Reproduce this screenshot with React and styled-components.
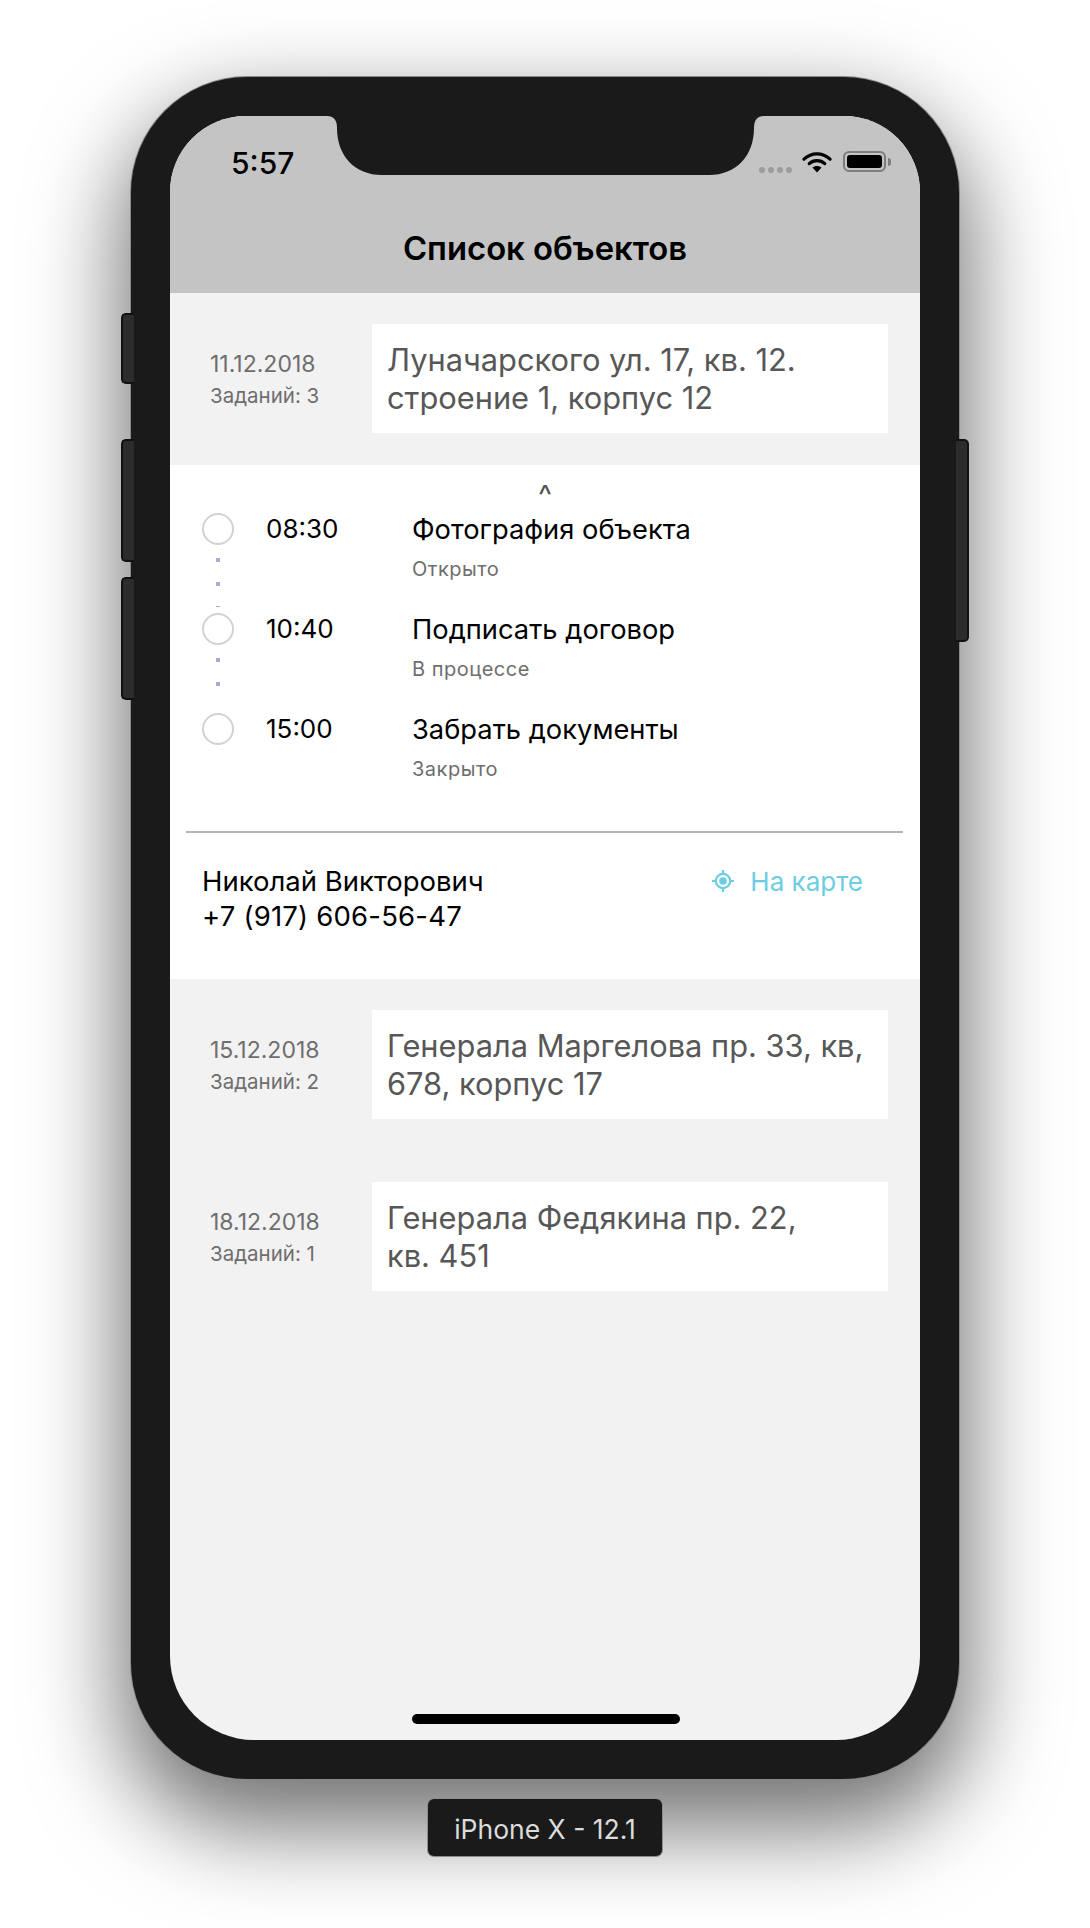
import styled, { createGlobalStyle } from "styled-components";

const objects = [
    { date: "15.12.2018", tasks: "Заданий: 2", address: ["Генерала Маргелова пр. 33, кв,", "678, корпус 17"] },
    { date: "18.12.2018", tasks: "Заданий: 1", address: ["Генерала Федякина пр. 22,", "кв. 451"] },
];

const tasks = [
    { time: "08:30", title: "Фотография объекта", status: "Открыто", line: 62 },
    { time: "10:40", title: "Подписать договор", status: "В процессе", line: 50 },
    { time: "15:00", title: "Забрать документы", status: "Закрыто", line: 0 },
];

const ObjectRow = ({ date, count, address }) => (
    <Row>
        <DateCol>
            <DateText>{date}</DateText>
            <Count>{count}</Count>
        </DateCol>
        <Address>
            {address.map((line) => (
                <div key={line}>{line}</div>
            ))}
        </Address>
    </Row>
);

const App = () => {
    return (
        <Page>
            <GlobalStyle />
            <Device>
                <SideButton $top={236} $height={71} />
                <SideButton $top={362} $height={123} />
                <SideButton $top={500} $height={123} />
                <PowerButton />
                <Screen>
                    <Notch viewBox="0 0 437 60">
                        <path d="M0 0Q10 0 10 12C10 40 28 59 55 59H382C409 59 427 40 427 12Q427 0 437 0Z" fill="#1a1a1a" />
                    </Notch>
                    <Header>
                        <StatusBar>
                            <Clock>5:57</Clock>
                            <StatusIcons>
                                <Signal>
                                    <i /><i /><i /><i />
                                </Signal>
                                <svg width="30" height="22" viewBox="0 0 30 22">
                                    <path d="M2 8.2C9.5 1 20.5 1 28 8.2" fill="none" stroke="#000" strokeWidth="3.2" strokeLinecap="round" />
                                    <path d="M7.2 12.6C11.5 8.6 18.5 8.6 22.8 12.6" fill="none" stroke="#000" strokeWidth="3.2" strokeLinecap="round" />
                                    <path d="M10.4 16.6C13 14.4 17 14.4 19.6 16.6L15 21.6Z" fill="#000" />
                                </svg>
                                <Battery>
                                    <BatteryFill />
                                </Battery>
                                <BatteryNub />
                            </StatusIcons>
                        </StatusBar>
                        <Title>Список объектов</Title>
                    </Header>
                    <Content>
                        <ObjectRow
                            date="11.12.2018"
                            count="Заданий: 3"
                            address={["Луначарского ул. 17, кв. 12.", "строение 1, корпус 12"]}
                        />
                        <Details>
                            <Caret>^</Caret>
                            {tasks.map((task) => (
                                <TaskRow key={task.time}>
                                    <Track>
                                        <Circle />
                                        {task.line > 0 && <Connector $height={task.line} />}
                                    </Track>
                                    <Time>{task.time}</Time>
                                    <TaskText>
                                        <TaskTitle>{task.title}</TaskTitle>
                                        <TaskStatus>{task.status}</TaskStatus>
                                    </TaskText>
                                </TaskRow>
                            ))}
                            <Divider />
                            <Contact>
                                <Person>
                                    <div>Николай Викторович</div>
                                    <Phone>+7 (917) 606-56-47</Phone>
                                </Person>
                                <MapLink>
                                    <svg width="22" height="22" viewBox="0 0 22 22">
                                        <circle cx="11" cy="11" r="7.2" fill="none" stroke="#6ccde2" strokeWidth="2.2" />
                                        <circle cx="11" cy="11" r="3.8" fill="#6ccde2" />
                                        <path d="M11 0V4M11 18V22M0 11H4M18 11H22" stroke="#6ccde2" strokeWidth="2.2" />
                                    </svg>
                                    На карте
                                </MapLink>
                            </Contact>
                        </Details>
                        {objects.map((item) => (
                            <ObjectRow key={item.date} date={item.date} count={item.tasks} address={item.address} />
                        ))}
                    </Content>
                    <HomeBar />
                </Screen>
            </Device>
            <DeviceLabel>iPhone X - 12.1</DeviceLabel>
        </Page>
    );
};

const GlobalStyle = createGlobalStyle`
    html, body {
        margin: 0;
        padding: 0;
        background: #fff;
    }
    * {
        box-sizing: border-box;
    }
`;

const Page = styled.div`
    width: 1090px;
    height: 1928px;
    padding-top: 77px;
    display: flex;
    flex-direction: column;
    align-items: center;
    overflow: hidden;
    font-family: Inter, "Noto Sans", sans-serif;
`;

const Device = styled.div`
    position: relative;
    width: 828px;
    height: 1702px;
    padding: 39px;
    background: #1a1a1a;
    border-radius: 116px;
    box-shadow: 0 0 0 1px #8a8a8a, 0 40px 90px 10px rgba(0, 0, 0, 0.55);
`;

const SideButton = styled.div`
    position: absolute;
    left: -10px;
    top: ${(props) => props.$top}px;
    width: 13px;
    height: ${(props) => props.$height}px;
    background: #2c2c2c;
    border: 2px solid #111;
    border-right: none;
    border-radius: 5px 0 0 5px;
`;

const PowerButton = styled.div`
    position: absolute;
    right: -10px;
    top: 362px;
    width: 13px;
    height: 203px;
    background: #2c2c2c;
    border: 2px solid #111;
    border-left: none;
    border-radius: 0 5px 5px 0;
`;

const Screen = styled.div`
    position: relative;
    display: flex;
    flex-direction: column;
    width: 750px;
    height: 1624px;
    background: #f2f2f2;
    border-radius: 76px 76px 84px 84px;
    overflow: hidden;
`;

const Notch = styled.svg`
    position: absolute;
    left: 157px;
    top: 0;
    width: 437px;
    height: 60px;
`;

const Header = styled.div`
    height: 177px;
    padding: 0 29px 0 61px;
    background: #c4c4c4;
`;

const StatusBar = styled.div`
    display: flex;
    justify-content: space-between;
    align-items: flex-start;
    height: 112px;
    padding-top: 30px;
`;

const Clock = styled.div`
    font-size: 30px;
    font-weight: 500;
    line-height: 34px;
    color: #000;
`;

const StatusIcons = styled.div`
    display: flex;
    align-items: flex-start;
    padding-top: 5px;

    svg {
        margin-right: 11px;
    }
`;

const Signal = styled.div`
    display: flex;
    gap: 3px;
    margin: 16px 10px 0 0;

    i {
        width: 6px;
        height: 6px;
        border-radius: 50%;
        background: #9b9b9b;
    }
`;

const Battery = styled.div`
    width: 43px;
    height: 21px;
    padding: 2px;
    border: 2px solid #7d7d7d;
    border-radius: 6px;
`;

const BatteryFill = styled.div`
    width: 100%;
    height: 100%;
    background: #000;
    border-radius: 3px;
`;

const BatteryNub = styled.div`
    width: 3px;
    height: 8px;
    margin: 7px 0 0 2px;
    background: #7d7d7d;
    border-radius: 0 3px 3px 0;
`;

const Title = styled.div`
    margin-left: -32px;
    text-align: center;
    font-size: 32.8px;
    font-weight: 600;
    line-height: 40px;
    color: #000;
`;

const Content = styled.div`
    display: flex;
    flex-direction: column;
`;

const Row = styled.div`
    display: flex;
    align-items: center;
    padding: 31px 32px 32px 40px;
`;

const DateCol = styled.div`
    width: 162px;
    padding-top: 3px;
    flex-shrink: 0;
    color: #6e6e6e;
`;

const DateText = styled.div`
    font-size: 23px;
    line-height: 32px;
`;

const Count = styled.div`
    font-size: 20.5px;
    line-height: 32px;
`;

const Address = styled.div`
    flex: 1;
    height: 109px;
    padding: 17px 15px 0;
    background: #fff;
    font-size: 30.8px;
    line-height: 38px;
    color: #575757;
`;

const Details = styled.div`
    position: relative;
    height: 514px;
    padding-top: 48px;
    background: #fff;
`;

const Caret = styled.div`
    position: absolute;
    left: 0;
    right: 0;
    top: 12px;
    text-align: center;
    font-size: 30px;
    line-height: 36px;
    color: #555;
`;

const TaskRow = styled.div`
    display: flex;
    height: 100px;
    padding-left: 32px;
`;

const Track = styled.div`
    display: flex;
    flex-direction: column;
    align-items: center;
    width: 32px;
`;

const Circle = styled.div`
    width: 32px;
    height: 32px;
    flex-shrink: 0;
    background: #fff;
    border: 2px solid #d2d2d2;
    border-radius: 50%;
`;

const Connector = styled.div`
    width: 4px;
    height: ${(props) => props.$height}px;
    background-image: linear-gradient(#a9a9d9 4px, transparent 4px);
    background-size: 4px 24px;
    background-position: 0 13px;
    background-repeat: repeat-y;
`;

const Time = styled.div`
    width: 178px;
    padding-left: 32px;
    font-size: 26px;
    line-height: 32px;
    color: #000;
`;

const TaskText = styled.div`
    display: flex;
    flex-direction: column;
`;

const TaskTitle = styled.div`
    font-size: 27.3px;
    line-height: 33px;
    color: #000;
`;

const TaskStatus = styled.div`
    margin-top: 11px;
    font-size: 20px;
    line-height: 24px;
    letter-spacing: 0.5px;
    color: #6e6e6e;
`;

const Divider = styled.div`
    height: 2px;
    margin: 18px 17px 0 16px;
    background: #b4b4b4;
`;

const Contact = styled.div`
    display: flex;
    justify-content: space-between;
    padding: 31px 57px 0 32px;
`;

const Person = styled.div`
    font-size: 27.5px;
    line-height: 35px;
    color: #000;
`;

const Phone = styled.div`
    letter-spacing: 0.2px;
`;

const MapLink = styled.div`
    display: flex;
    align-items: center;
    gap: 16px;
    height: 34px;
    font-size: 26px;
    color: #6ccde2;
`;

const HomeBar = styled.div`
    position: absolute;
    left: 242px;
    bottom: 16px;
    width: 268px;
    height: 10px;
    background: #000;
    border-radius: 5px;
`;

const DeviceLabel = styled.div`
    display: flex;
    align-items: center;
    justify-content: center;
    position: relative;
    width: 234px;
    height: 57px;
    margin-top: 20px;
    padding-top: 2px;
    background: #1a1a1a;
    border-radius: 6px;
    box-shadow: 0 0 0 1px #8d8d8d;
    font-size: 26.5px;
    color: #dcdcdc;
`;

export default App;
